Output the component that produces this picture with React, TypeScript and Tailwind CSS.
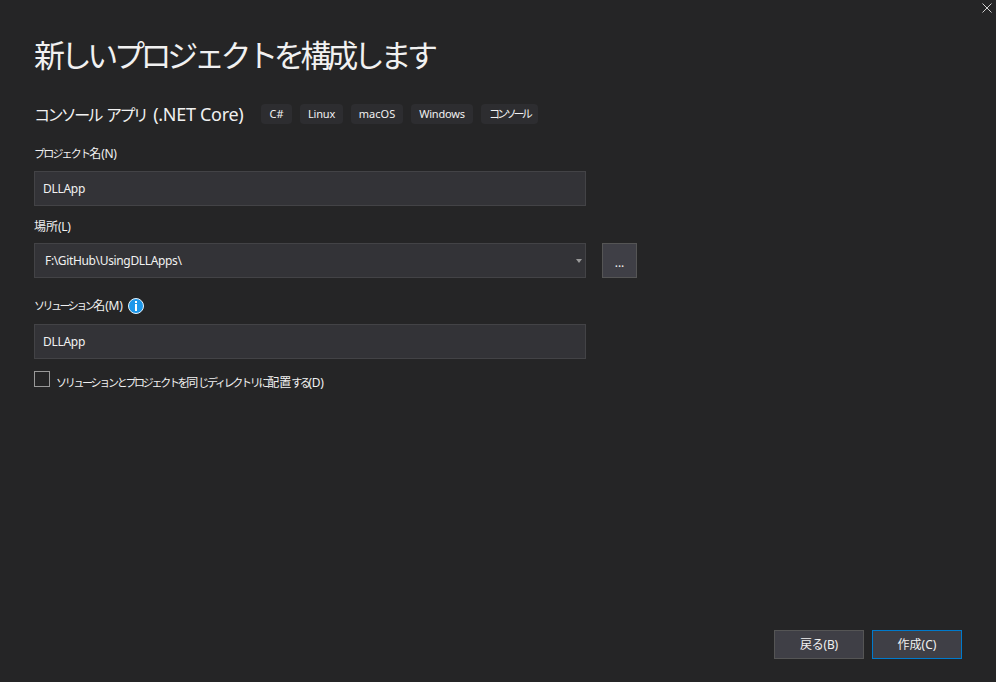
import type { ReactNode } from "react";

const jp = "font-['Noto_Sans','Noto_Sans_CJK_JP',sans-serif]";

function Label({ children, hint }: { children: ReactNode; hint: string }) {
  return (
    <span className="whitespace-nowrap text-[12px] leading-[16px] text-[#f1f1f1]">
      {children}
      <span className="tracking-[-0.3px]">{hint}</span>
    </span>
  );
}

function Field({ value }: { value: string }) {
  return (
    <div className="flex h-[35px] w-[552px] items-center border border-[#434346] bg-[#333337] pl-[8px] text-[12px] tracking-[-0.3px] text-[#f1f1f1]">
      {value}
    </div>
  );
}

function Tag({ label, width, tight }: { label: string; width: string; tight?: string }) {
  return (
    <span
      className={`flex h-[20px] items-center justify-center rounded-[4px] bg-[#2d2d30] text-[11px] text-[#f1f1f1] ${width} ${tight ?? ""}`}
    >
      {label}
    </span>
  );
}

function InfoIcon() {
  return (
    <svg width="16" height="16" viewBox="0 0 16 16">
      <circle cx="8" cy="8" r="7.5" fill="#1c97ea" stroke="#e8f4fc" strokeWidth="1" />
      <rect x="7" y="3" width="2" height="2" fill="#fff" />
      <rect x="7" y="6" width="2" height="7" fill="#fff" />
    </svg>
  );
}

export default function App() {
  return (
    <div className={`relative flex h-[682px] w-[996px] flex-col overflow-hidden bg-[#252526] px-[34px] ${jp}`}>
      {/* close */}
      <svg className="absolute right-[4px] top-[3px]" width="10" height="10" viewBox="0 0 10 10">
        <path d="M0.5 0.5 L9.5 9.5 M9.5 0.5 L0.5 9.5" stroke="#d0d0d0" strokeWidth="1" fill="none" />
      </svg>

      <h1 className="mt-[33px] whitespace-nowrap text-[31px] leading-[44px] tracking-[-4.35px] text-[#f1f1f1]">
        新しいプロジェクトを構成します
      </h1>

      <div className="mt-[22px] flex h-[30px] items-center">
        <span className="w-[227px] whitespace-nowrap text-[18px] tracking-[-0.3px] text-[#f1f1f1]">
          <span className="text-[16px] tracking-[-2.6px]">コンソール</span>
          <span className="ml-[5px] text-[16px] tracking-[-2.6px]">アプリ</span>
          <span className="ml-[7px]">(.NET Core)</span>
        </span>
        <div className="flex gap-[8px]">
          <Tag label="C#" width="w-[31px]" />
          <Tag label="Linux" width="w-[43px]" tight="tracking-[-0.2px]" />
          <Tag label="macOS" width="w-[52px]" />
          <Tag label="Windows" width="w-[62px]" tight="tracking-[-0.2px]" />
          <Tag label="コンソール" width="w-[57px]" tight="tracking-[-2.8px]" />
        </div>
      </div>

      <div className="mt-[16px] flex h-[17px] items-center">
        <Label hint="(N)">
          <span className="text-[11px] tracking-[-1.8px]">プロジェクト</span>名
        </Label>
      </div>
      <div className="mt-[9px]">
        <Field value="DLLApp" />
      </div>

      <div className="mt-[12px] flex h-[17px] items-center">
        <Label hint="(L)">場所</Label>
      </div>
      <div className="mt-[8px] flex items-center gap-[16px]">
        <div className="flex h-[35px] w-[552px] items-center justify-between border border-[#434346] bg-[#333337] pl-[10px] pr-[3px] text-[12px] tracking-[-0.35px] text-[#f1f1f1]">
          <span>F:\GitHub\UsingDLLApps\</span>
          <svg width="6" height="4" viewBox="0 0 6 4">
            <path d="M0 0 H6 L3 4 Z" fill="#999999" />
          </svg>
        </div>
        <div className="flex h-[35px] w-[35px] items-center justify-center border border-[#555555] bg-[#3f3f46] pt-[4px] text-[12px] text-[#f1f1f1]">
          ...
        </div>
      </div>

      <div className="mt-[18px] flex h-[20px] items-center gap-[6px]">
        <Label hint="(M)">
          <span className="text-[11px] tracking-[-2.5px]">ソリューション</span>名
        </Label>
        <InfoIcon />
      </div>
      <div className="mt-[8px]">
        <Field value="DLLApp" />
      </div>

      <div className="mt-[12px] flex items-start gap-[6px]">
        <div className="h-[16px] w-[16px] border border-[#999999]" />
        <div className="pt-[2px] leading-[16px]">
          <Label hint="(D)">
            <span className="text-[11px] tracking-[-2.3px]">ソリューションとプロジェクトを</span>同
            <span className="text-[11px] tracking-[-2.3px]">じディレクトリに</span>配置
            <span className="text-[11px] tracking-[-2.3px]">する</span>
          </Label>
        </div>
      </div>

      <div className="mb-[23px] mt-auto flex justify-end gap-[8px]">
        <button className="h-[29px] w-[90px] border border-[#555555] bg-[#3f3f46] text-[12px] tracking-[-0.2px] text-[#f1f1f1]">
          戻る(B)
        </button>
        <button className="h-[29px] w-[90px] border border-[#007acc] bg-[#3f3f46] text-[12px] text-[#f1f1f1]">
          作成(C)
        </button>
      </div>
    </div>
  );
}
